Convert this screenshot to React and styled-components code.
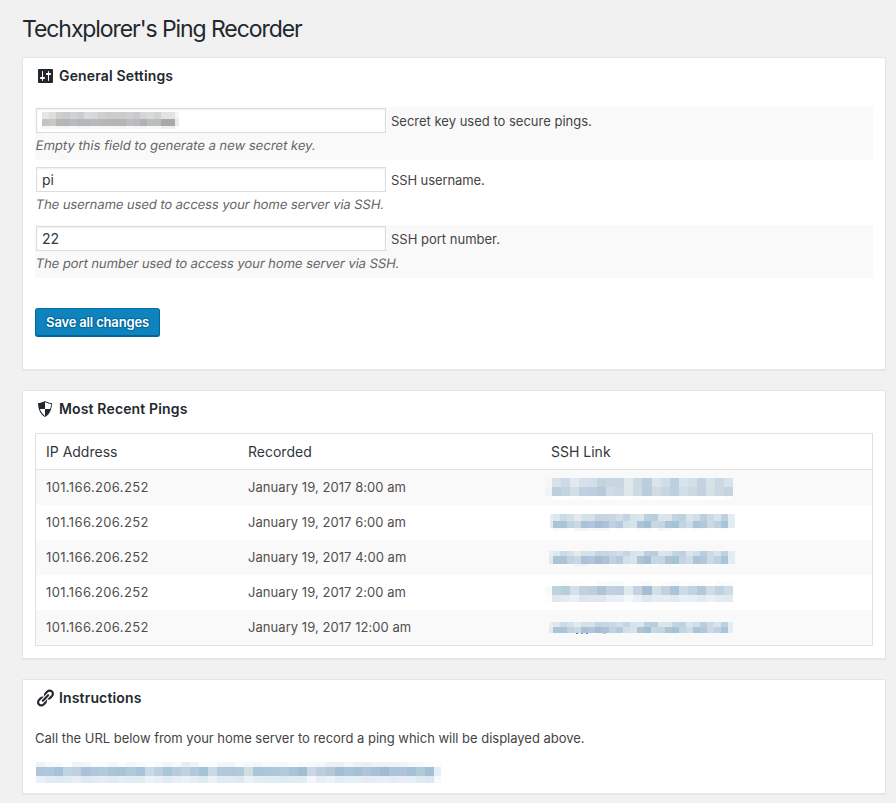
import React from 'react';
import styled, { createGlobalStyle } from 'styled-components';

const GlobalStyle = createGlobalStyle`
  *, *::before, *::after { box-sizing: border-box; }
  body {
    margin: 0;
    background: #f1f1f1;
    color: #444;
    font: 13px/20px Inter, "Liberation Sans", sans-serif;
  }
`;

const Page = styled.main`
  width: 896px;
  height: 803px;
  padding: 14px 10px 0 22px;
  overflow: hidden;
`;

const PageTitle = styled.h1`
  margin: 0 0 13px;
  font-size: 23px;
  font-weight: 400;
  line-height: 30px;
  letter-spacing: -1.08px;
  color: #23282d;
`;

const Panel = styled.section`
  height: ${(p) => p.$height}px;
  margin-bottom: 20px;
  padding: 8px 12px 0;
  background: #fff;
  border: 1px solid #e5e5e5;
  box-shadow: 0 1px 1px rgba(0, 0, 0, 0.04);
`;

const PanelTitle = styled.h2`
  display: flex;
  align-items: center;
  gap: 4px;
  height: 20px;
  margin: 0;
  font-size: 14px;
  font-weight: 600;
  letter-spacing: 0.15px;
  color: #23282d;

  svg { display: block; flex: none; }
`;

const SettingsList = styled.div`
  display: flex;
  flex-direction: column;
  gap: 6px;
  margin-top: 21px;
`;

const SettingRow = styled.div`
  height: 53px;
  padding: 1px 1px 0;
  background: ${(p) => (p.$striped ? '#f9f9f9' : '#fff')};
`;

const FieldLine = styled.label`
  display: flex;
  align-items: center;
  gap: 5px;
  height: 25px;
  letter-spacing: ${(p) => p.$tracking || 0}px;
`;

const Field = styled.div`
  display: flex;
  align-items: center;
  width: 350px;
  height: 25px;
  padding: 0 5px;
  border: 1px solid #ddd;
  background: #fff;
  box-shadow: inset 0 1px 2px rgba(0, 0, 0, 0.07);
  font-size: 14px;
  letter-spacing: 0;
  color: #32373c;
`;

const Hint = styled.p`
  width: max-content;
  margin: 2px 0 0;
  transform: skewX(-10deg);
  letter-spacing: ${(p) => p.$tracking || 0}px;
  color: #666;
`;

const SaveButton = styled.button`
  display: block;
  width: 125px;
  height: 29px;
  margin-top: 30px;
  padding: 0 0 1px;
  border: 1px solid #006799;
  border-color: #0073aa #006799 #006799;
  border-radius: 3px;
  background: #0f83be;
  box-shadow: inset 0 -1px 0 #006799;
  color: #fff;
  font: 600 13px/26px Inter, sans-serif;
  letter-spacing: -0.17px;
  white-space: nowrap;
  text-shadow: 0 -1px 1px #006799, 1px 0 1px #006799, 0 1px 1px #006799, -1px 0 1px #006799;
`;

const PingTable = styled.div`
  margin-top: 14px;
  border: 1px solid #e1e1e1;
`;

const PingRow = styled.div`
  display: grid;
  grid-template-columns: 202px 303px 1fr;
  height: 35px;
  padding-left: 10px;
  line-height: 35px;
  color: #4f4f4f;
  background: ${(p) => (p.$striped ? '#f9f9f9' : '#fff')};
`;

const PingHead = styled(PingRow)`
  height: 36px;
  border-bottom: 1px solid #e1e1e1;
  font-size: 14px;
  line-height: 36px;
  color: #32373c;
`;

const Cell = styled.span`
  letter-spacing: ${(p) => p.$tracking || 0}px;
  white-space: nowrap;
`;

const LinkCell = styled.div`
  padding-top: ${(p) => p.$top}px;
  margin-left: ${(p) => p.$shift}px;
`;

const Instruction = styled.p`
  margin: 20px 0 14px;
  letter-spacing: -0.02px;
`;

const MosaicGrid = styled.div`
  display: flex;
  flex-direction: column;
`;

const MosaicRow = styled.div`
  display: flex;
  height: ${(p) => p.$height}px;
`;

const Pixel = styled.i`
  flex: none;
  width: ${(p) => p.$width}px;
  background: ${(p) => p.$color};
`;

const UrlLine = styled.div`
  padding-left: 1px;
`;

const SpeckRow = styled.div`
  display: flex;
  gap: 3px;
  height: 1px;
  padding-left: 27px;
`;

/* Each row is { h, colors }; "lead" and "tail" are the widths of clipped edge cells. */
function Mosaic({ size, lead, tail, rows }) {
  return (
    <MosaicGrid>
      {rows.map(({ h, colors }, r) => {
        const list = colors.split(' ');
        return (
          <MosaicRow key={r} $height={h}>
            {list.map((c, i) => {
              let width = size;
              if (lead && i === 0) width = lead;
              if (tail && i === list.length - 1) width = tail;
              return <Pixel key={i} $width={width} $color={`#${c}`} />;
            })}
          </MosaicRow>
        );
      })}
    </MosaicGrid>
  );
}

const secretKey = {
  size: 7,
  tail: 4,
  rows: [
    { h: 7, colors: 'e6e6e6 dddddd cfcec9 c9cacb d0d2d3 c9cdd0 d9dadc d6d7d8 cecfcf cccccb cecdca cccdcb d0d0d0 c9cacb d5d6d9 d8d9d9 d1d2d3 e3e3e3 e3e3e3 f4f5f7' },
    { h: 7, colors: 'c3c3c4 c8c8c8 b8b7b3 b3b5b6 b9bbbc b3b7b9 b4b7b7 b9babc b8b8ba b5b6b6 b4b4b3 b3b5b6 bebebf b9bbbc b0b1b5 bbbcbc b9bbbc a8a8a9 a8a8a9 e7eaef' },
    { h: 3, colors: 'f5f5f5 f8f8f8 f7f7f6 f6f6f6 f8f8f8 f5f5f5 f7f7f7 f7f7f7 f7f7f7 f8f8f8 f6f6f6 f5f5f5 f9f9f9 f6f6f6 f6f6f6 f9f9f9 f8f8f8 f0f0f1 eeeeef fdfdfd' },
  ],
};

const topTone = 'e9eeee dbe8ef cbdbe5 d4e1eb e5eaef d4e1e9 d7e1e9 c6d3e0 c9d5e1 c8d8e4 d2dfe7 c5d4e3 d5e4eb dce5e9 bdd0df b9cedd dae6ed dde4e9 c4d5e2 bdd2df d9e5ed d3dee8 bbcfdf cbdae5 d8e3ec bdd2df e4edf4';
const midTone = 'e4e9ec a9c5d6 abc4d6 bfd3e1 ccd7e2 aac2d8 b1c5dc a9bad3 aac3d7 c1d1df b5c9df d2e0e9 d9e3e8 acc5d7 a0bfd5 c7d8e2 c6d5e3 acc5d6 a4c4d5 c3d5e2 cedce5 abc5d8 b1c7dc cad9e4 bdd1e0 a9c5da e1ecf3';

const links = [
  {
    top: 8, shift: -6,
    data: {
      size: 9.05, lead: 7,
      rows: [
        { h: 9, colors: 'f5f6f7 d7e2ea ccdbe6 e2e8ef d7e1ea d2dee8 c5d3e0 cad6e4 c8d5e3 dfe8eb ccdae4 bbcedf d9e4eb d0dce6 bccfdf d8e4eb d2dee8 c4d2e2 d7e2e9 c9d8e3 d7e2ec' },
        { h: 9, colors: 'f2f3f6 bdcfdd c3d4e1 d2dee6 c1cfe0 c0cddf b8cad9 cfdce6 ccd7e4 e0e7e9 cedae3 bacddb cfdce5 c7d5e2 bdd0df d1dde8 ccd9e3 c3d2df d4dfe6 c9d8e2 c3d3e0' },
        { h: 4, colors: 'f9f9f9 fefefe ffffff fcfcfd fdfdfe ffffff ffffff fdfdfd ffffff ffffff fcfcfd ffffff ffffff fdfdfe fdfdfd ffffff ffffff ffffff fdfdfd ffffff fcfcfd' },
      ],
    },
  },
  {
    top: 9, shift: -1,
    data: {
      size: 7, lead: 3, tail: 7,
      rows: [
        { h: 7, colors: topTone },
        { h: 7, colors: midTone },
        { h: 3, colors: 'ffffff f6f9fb f8fafc ffffff f3f5f9 f2f5f9 f7f9fc f3f6fa f5f7fb ffffff fcfdfe ffffff ffffff f9fbfc f9fbfc ffffff f3f6fa f8fafd ffffff fafcfd ffffff f8fbfc fbfcfd ffffff ffffff fafbfd' },
      ],
    },
  },
  {
    top: 11, shift: -2,
    data: {
      size: 7, lead: 4, tail: 7,
      rows: [
        { h: 5, colors: topTone },
        { h: 8, colors: midTone },
        { h: 2, colors: 'f9f9f9 fcfcfc fcfcfc f9f9f9 f0f2f6 eff2f6 fafafa fafafa f9f9f9 ffffff fafafa f9f9f9 fcfcfc f5f7f9 fafafa ffffff f5f6fa f9f9f9 ffffff f7f9fa fafafa fafafa fafafa f9f9f9 fbfbfb fafafa' },
      ],
    },
  },
  {
    top: 6, shift: -6,
    data: {
      size: 9.05, lead: 7,
      rows: [
        { h: 5, colors: 'ffffff ffffff fbfcfd fdfdfe fdfdfe ffffff f9fbfc f8fbfc f8fafc fefefe fcfdfe f7f9fc fefefe f9fbfc f8fafc fdfdfe f9fbfc fafcfd fdfefe f8fafc fbfcfd' },
        { h: 9, colors: 'f8f9f9 bfd2df b9cedd d7e1e9 c3d1df bfcedf afc5d7 c1d1e0 becde0 dfe9ee c2d2e0 a4bfd5 d3e0e8 c3d1df abc4d7 ccdbe6 c3d3e1 b3c8dc cfdce7 bfd2df cbdce6' },
        { h: 7, colors: 'fdfdfd dfe8ee e4ebf1 ebf0f5 dce6ee e0e7ef dfe6ee e9eef4 e9eff5 f4f8fa e9eff5 dde8f0 e5edf2 e5ecf3 e0e9f0 e8eff5 e7eef5 e1e9f1 ebf0f5 e4ecf1 e2eaf1' },
      ],
    },
  },
  {
    top: 12, shift: -2, specks: true,
    data: {
      size: 7, lead: 4, tail: 5,
      rows: [
        { h: 5, colors: topTone },
        { h: 6, colors: midTone },
      ],
    },
  },
];

const urlMosaic = {
  size: 9.05,
  tail: 7,
  rows: [
    { h: 5, colors: 'f0f2f5 f6f8f9 f8fafb fcfdfd f1f3f6 f4f5f7 fbfcfc fafbfc f4f6f8 fafcfc f4f6f8 f8fafa fbfcfd f8fafb f3f6f8 f8f9fb e9eef3 f0f3f6 fafcfd fbfcfd f4f6f9 f2f5f8 fafcfc f6f9fa f4f6f8 f8fbfb fafafa f7f8fa fcfcfd f7f9fb f7f9fb f4f6f9 eceff4 eaeff3 f4f6f9 edf1f5 e9eff4 eef1f5 eef1f5 eef1f5 f1f4f7 f5f7f9 f7f9fa fafcfd fdfefe' },
    { h: 9, colors: 'afc5d9 b1c7dc a5c2da bed5df c0cfdd a9c2d9 b0c7da b3c9dc a8c6d7 a5c4d4 afcad7 a5c4d8 c9dae6 bad0de aac6d6 b7cddd bed2df b2c9dc a4c3d7 cad9e4 b0cada b1c7dc b3c9dc d0dee3 a8c6d8 a9c7d8 adc9d8 b3cadc a9c4d6 a0bfd3 c8d6e7 bbcede b6c7dc a1bed5 a8c2d8 a4c0d6 afc5d7 a9bfd8 a0bcd5 aec3dc adc2db a4c0d6 b0c9d8 a3c0d5 e7eff6' },
    { h: 7, colors: 'eaf0f7 e2ebf4 dfeaf1 e1edf3 e6eef5 dfe9f1 e1ebf3 e5ecf4 dfeaf2 e4eff5 e1edf2 e2edf2 edf3f9 e8f0f6 dfebf3 e7eff5 eaf1f8 e6eef5 dfeaf1 eaf2f7 e1ebf2 e2ebf4 dee9f2 eaf2f5 e3edf3 e0eef4 e2edf2 dfebf2 e0edf3 e0edf3 f3f7fc e7eef6 edf2f8 e3edf3 e5edf5 e6eff5 e3edf2 e5eef6 e8eef6 e4edf4 e7eef6 e4eef4 e0ebf1 dbe8ef f6fafd' },
  ],
};

const SettingsIcon = () => (
  <svg width="20" height="20" viewBox="0 0 20 20" aria-hidden="true">
    <path fill="#23282d" d="M18 16V4c0-.55-.45-1-1-1H4c-.55 0-1 .45-1 1v12c0 .55.45 1 1 1h13c.55 0 1-.45 1-1zM8 11h1c.55 0 1 .45 1 1s-.45 1-1 1H8v1.5c0 .28-.22.5-.5.5s-.5-.22-.5-.5V13H6c-.55 0-1-.45-1-1s.45-1 1-1h1V5.500c0-.28.22-.5.5-.5s.5.22.5.5V11zm5-2h-1c-.55 0-1-.45-1-1s.45-1 1-1h1V5.500c0-.28.22-.5.5-.5s.5.22.5.5V7h1c.55 0 1 .45 1 1s-.45 1-1 1h-1v5.500c0 .28-.22.5-.5.5s-.5-.22-.5-.5V9z" />
  </svg>
);

const ShieldIcon = () => (
  <svg width="20" height="20" viewBox="0 0 20 20" aria-hidden="true">
    <path fill="#23282d" d="M10 2s3 2 7 2c0 11-7 14-7 14S3 15 3 4c4 0 7-2 7-2zm0 8h5s1-1 1-5c0 0-5-1-6-2v7H5c1 4 5 7 5 7v-7z" />
  </svg>
);

const LinkIcon = () => (
  <svg width="20" height="20" viewBox="0 0 20 20" aria-hidden="true">
    <path fill="#23282d" d="M17.740 2.760c1.680 1.690 1.680 4.410 0 6.100l-1.530 1.520c-1.120 1.120-2.700 1.470-4.140 1.090l2.620-2.610.760-.770.760-.760c.840-.840.840-2.200 0-3.040-.840-.850-2.200-.850-3.040 0l-.770.760-3.380 3.380c-.370-1.440-.020-3.020 1.100-4.140l1.520-1.530c1.690-1.680 4.420-1.680 6.100 0zM8.590 13.430l5.340-5.340c.420-.420.420-1.100 0-1.520-.440-.430-1.130-.390-1.530 0l-5.330 5.340c-.420.420-.420 1.100 0 1.520.440.430 1.130.390 1.520 0zm-.760 2.290l4.140-4.150c.380 1.440.030 3.020-1.090 4.140l-1.520 1.530c-1.690 1.680-4.410 1.680-6.100 0-1.680-1.680-1.680-4.420 0-6.100l1.530-1.520c1.120-1.120 2.700-1.470 4.140-1.100l-4.140 4.150c-.850.840-.850 2.200 0 3.050.840.840 2.200.840 3.040 0z" />
  </svg>
);

const settings = [
  { secret: true, label: 'Secret key used to secure pings.', hint: 'Empty this field to generate a new secret key.', lt: 0, ht: 0.01 },
  { value: 'pi', label: 'SSH username.', hint: 'The username used to access your home server via SSH.', lt: -0.1, ht: -0.07 },
  { value: '22', label: 'SSH port number.', hint: 'The port number used to access your home server via SSH.', lt: 0, ht: -0.055 },
];

const times = ['8:00 am', '6:00 am', '4:00 am', '2:00 am', '12:00 am'];

export default function App() {
  return (
    <>
      <GlobalStyle />
      <Page>
        <PageTitle>Techxplorer's Ping Recorder</PageTitle>

        <Panel $height={313}>
          <PanelTitle><SettingsIcon />General Settings</PanelTitle>
          <SettingsList>
            {settings.map((s, i) => (
              <SettingRow key={s.label} $striped={i % 2 === 0}>
                <FieldLine $tracking={s.lt}>
                  <Field>{s.secret ? <Mosaic {...secretKey} /> : s.value}</Field>
                  {s.label}
                </FieldLine>
                <Hint $tracking={s.ht}>{s.hint}</Hint>
              </SettingRow>
            ))}
          </SettingsList>
          <SaveButton type="button">Save all changes</SaveButton>
        </Panel>

        <Panel $height={269}>
          <PanelTitle><ShieldIcon />Most Recent Pings</PanelTitle>
          <PingTable>
            <PingHead>
              <Cell>IP Address</Cell>
              <Cell>Recorded</Cell>
              <Cell>SSH Link</Cell>
            </PingHead>
            {times.map((time, i) => (
              <PingRow key={time} $striped={i % 2 === 0}>
                <Cell $tracking={0.36}>101.166.206.252</Cell>
                <Cell $tracking={0.05}>January 19, 2017 {time}</Cell>
                <LinkCell $top={links[i].top} $shift={links[i].shift}>
                  <Mosaic {...links[i].data} />
                  {links[i].specks && (
                    <SpeckRow>
                      <Pixel $width={2} $color="#4f7f98" />
                      <Pixel $width={2} $color="#6c9bb5" />
                      <Pixel $width={2} $color="#7584b4" />
                      <Pixel $width={9} $color="transparent" />
                      <Pixel $width={3} $color="#b4c6d4" />
                    </SpeckRow>
                  )}
                </LinkCell>
              </PingRow>
            ))}
          </PingTable>
        </Panel>

        <Panel $height={115}>
          <PanelTitle><LinkIcon />Instructions</PanelTitle>
          <Instruction>
            Call the URL below from your home server to record a ping which will be displayed above.
          </Instruction>
          <UrlLine>
            <Mosaic {...urlMosaic} />
          </UrlLine>
        </Panel>
      </Page>
    </>
  );
}
